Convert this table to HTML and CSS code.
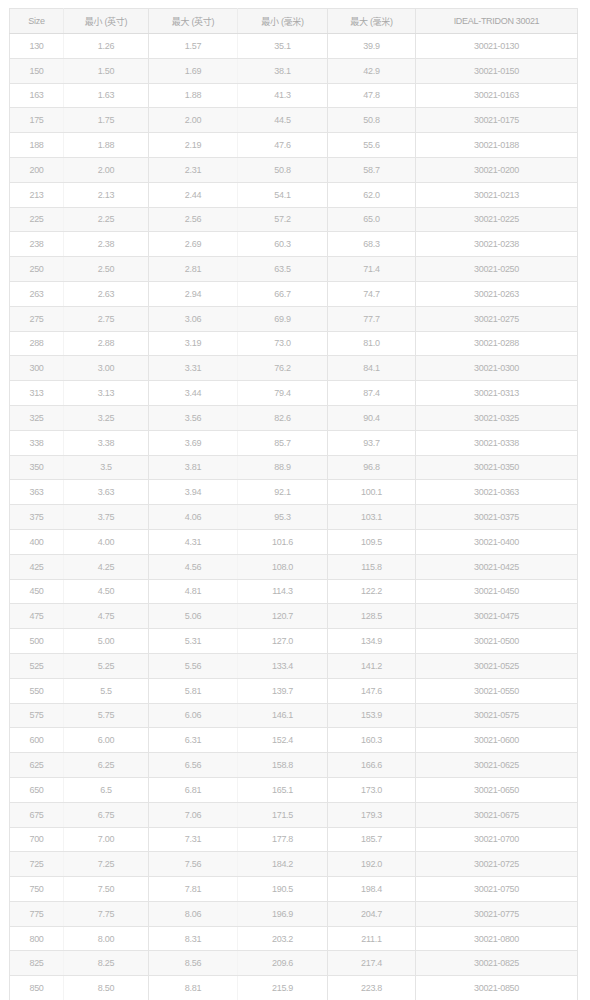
FILE: index.html
```html
<!DOCTYPE html>
<html lang="zh">
<head>
<meta charset="utf-8">
<title>IDEAL-TRIDON 30021</title>
<link rel="stylesheet" href="styles.css">
</head>
<body>
<table class="size-table">
  <colgroup>
    <col class="c-size">
    <col class="c-in-min">
    <col class="c-in-max">
    <col class="c-mm-min">
    <col class="c-mm-max">
    <col class="c-part">
  </colgroup>
  <thead>
    <tr>
      <th class="faint-r">Size</th>
      <th>最小 (英寸)</th>
      <th class="faint-r">最大 (英寸)</th>
      <th>最小 (毫米)</th>
      <th>最大 (毫米)</th>
      <th>IDEAL-TRIDON 30021</th>
    </tr>
  </thead>
  <tbody>
    <tr><td class="faint-r">130</td><td>1.26</td><td class="faint-r">1.57</td><td>35.1</td><td>39.9</td><td>30021-0130</td></tr>
    <tr><td class="faint-r">150</td><td>1.50</td><td class="faint-r">1.69</td><td>38.1</td><td>42.9</td><td>30021-0150</td></tr>
    <tr><td class="faint-r">163</td><td>1.63</td><td class="faint-r">1.88</td><td>41.3</td><td>47.8</td><td>30021-0163</td></tr>
    <tr><td class="faint-r">175</td><td>1.75</td><td class="faint-r">2.00</td><td>44.5</td><td>50.8</td><td>30021-0175</td></tr>
    <tr><td class="faint-r">188</td><td>1.88</td><td class="faint-r">2.19</td><td>47.6</td><td>55.6</td><td>30021-0188</td></tr>
    <tr><td class="faint-r">200</td><td>2.00</td><td class="faint-r">2.31</td><td>50.8</td><td>58.7</td><td>30021-0200</td></tr>
    <tr><td class="faint-r">213</td><td>2.13</td><td class="faint-r">2.44</td><td>54.1</td><td>62.0</td><td>30021-0213</td></tr>
    <tr><td class="faint-r">225</td><td>2.25</td><td class="faint-r">2.56</td><td>57.2</td><td>65.0</td><td>30021-0225</td></tr>
    <tr><td class="faint-r">238</td><td>2.38</td><td class="faint-r">2.69</td><td>60.3</td><td>68.3</td><td>30021-0238</td></tr>
    <tr><td class="faint-r">250</td><td>2.50</td><td class="faint-r">2.81</td><td>63.5</td><td>71.4</td><td>30021-0250</td></tr>
    <tr><td class="faint-r">263</td><td>2.63</td><td class="faint-r">2.94</td><td>66.7</td><td>74.7</td><td>30021-0263</td></tr>
    <tr><td class="faint-r">275</td><td>2.75</td><td class="faint-r">3.06</td><td>69.9</td><td>77.7</td><td>30021-0275</td></tr>
    <tr><td class="faint-r">288</td><td>2.88</td><td class="faint-r">3.19</td><td>73.0</td><td>81.0</td><td>30021-0288</td></tr>
    <tr><td class="faint-r">300</td><td>3.00</td><td class="faint-r">3.31</td><td>76.2</td><td>84.1</td><td>30021-0300</td></tr>
    <tr><td class="faint-r">313</td><td>3.13</td><td class="faint-r">3.44</td><td>79.4</td><td>87.4</td><td>30021-0313</td></tr>
    <tr><td class="faint-r">325</td><td>3.25</td><td class="faint-r">3.56</td><td>82.6</td><td>90.4</td><td>30021-0325</td></tr>
    <tr><td class="faint-r">338</td><td>3.38</td><td class="faint-r">3.69</td><td>85.7</td><td>93.7</td><td>30021-0338</td></tr>
    <tr><td class="faint-r">350</td><td>3.5</td><td class="faint-r">3.81</td><td>88.9</td><td>96.8</td><td>30021-0350</td></tr>
    <tr><td class="faint-r">363</td><td>3.63</td><td class="faint-r">3.94</td><td>92.1</td><td>100.1</td><td>30021-0363</td></tr>
    <tr><td class="faint-r">375</td><td>3.75</td><td class="faint-r">4.06</td><td>95.3</td><td>103.1</td><td>30021-0375</td></tr>
    <tr><td class="faint-r">400</td><td>4.00</td><td class="faint-r">4.31</td><td>101.6</td><td>109.5</td><td>30021-0400</td></tr>
    <tr><td class="faint-r">425</td><td>4.25</td><td class="faint-r">4.56</td><td>108.0</td><td>115.8</td><td>30021-0425</td></tr>
    <tr><td class="faint-r">450</td><td>4.50</td><td class="faint-r">4.81</td><td>114.3</td><td>122.2</td><td>30021-0450</td></tr>
    <tr><td class="faint-r">475</td><td>4.75</td><td class="faint-r">5.06</td><td>120.7</td><td>128.5</td><td>30021-0475</td></tr>
    <tr><td class="faint-r">500</td><td>5.00</td><td class="faint-r">5.31</td><td>127.0</td><td>134.9</td><td>30021-0500</td></tr>
    <tr><td class="faint-r">525</td><td>5.25</td><td class="faint-r">5.56</td><td>133.4</td><td>141.2</td><td>30021-0525</td></tr>
    <tr><td class="faint-r">550</td><td>5.5</td><td class="faint-r">5.81</td><td>139.7</td><td>147.6</td><td>30021-0550</td></tr>
    <tr><td class="faint-r">575</td><td>5.75</td><td class="faint-r">6.06</td><td>146.1</td><td>153.9</td><td>30021-0575</td></tr>
    <tr><td class="faint-r">600</td><td>6.00</td><td class="faint-r">6.31</td><td>152.4</td><td>160.3</td><td>30021-0600</td></tr>
    <tr><td class="faint-r">625</td><td>6.25</td><td class="faint-r">6.56</td><td>158.8</td><td>166.6</td><td>30021-0625</td></tr>
    <tr><td class="faint-r">650</td><td>6.5</td><td class="faint-r">6.81</td><td>165.1</td><td>173.0</td><td>30021-0650</td></tr>
    <tr><td class="faint-r">675</td><td>6.75</td><td class="faint-r">7.06</td><td>171.5</td><td>179.3</td><td>30021-0675</td></tr>
    <tr><td class="faint-r">700</td><td>7.00</td><td class="faint-r">7.31</td><td>177.8</td><td>185.7</td><td>30021-0700</td></tr>
    <tr><td class="faint-r">725</td><td>7.25</td><td class="faint-r">7.56</td><td>184.2</td><td>192.0</td><td>30021-0725</td></tr>
    <tr><td class="faint-r">750</td><td>7.50</td><td class="faint-r">7.81</td><td>190.5</td><td>198.4</td><td>30021-0750</td></tr>
    <tr><td class="faint-r">775</td><td>7.75</td><td class="faint-r">8.06</td><td>196.9</td><td>204.7</td><td>30021-0775</td></tr>
    <tr><td class="faint-r">800</td><td>8.00</td><td class="faint-r">8.31</td><td>203.2</td><td>211.1</td><td>30021-0800</td></tr>
    <tr><td class="faint-r">825</td><td>8.25</td><td class="faint-r">8.56</td><td>209.6</td><td>217.4</td><td>30021-0825</td></tr>
    <tr><td class="faint-r">850</td><td>8.50</td><td class="faint-r">8.81</td><td>215.9</td><td>223.8</td><td>30021-0850</td></tr>
  </tbody>
</table>
</body>
</html>
```

FILE: styles.css
```css
html, body {
  margin: 0;
  padding: 0;
  background: #ffffff;
}

body {
  padding: 8px 0 0 9px;
  font-family: "Liberation Sans", "Noto Sans CJK SC", sans-serif;
}

.size-table {
  width: 568px;
  border-collapse: collapse;
  table-layout: fixed;
  font-size: 9px;
  letter-spacing: -0.3px;
  color: #b4b4b4;
  border: 1px solid #dddddd;
}

.c-size { width: 54px; }
.c-in-min { width: 85px; }
.c-in-max { width: 89px; }
.c-mm-min { width: 90px; }
.c-mm-max { width: 88px; }
.c-part { width: 162px; }

.size-table th,
.size-table td {
  text-align: center;
  font-weight: normal;
  padding: 0;
  border: 1px solid #e4e4e4;
  white-space: nowrap;
  overflow: hidden;
}

.size-table thead tr {
  height: 25px;
  background: #f6f6f6;
}

.size-table th {
  color: #a8a8a8;
  border-bottom-color: #dddddd;
}

.size-table tbody tr {
  height: 24.8px;
}

.size-table tbody tr:nth-child(even) {
  background: #f8f8f8;
}

.size-table .faint-r {
  border-right-color: #f4f4f4;
}

.size-table th.faint-r {
  border-right-color: #ececec;
}
```
